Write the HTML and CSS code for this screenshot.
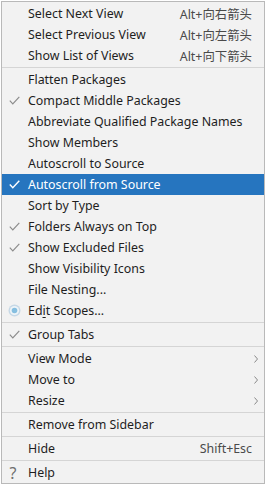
FILE: index.html
```html
<!DOCTYPE html>
<html lang="zh-CN">
<head>
    <meta charset="UTF-8">
    <title>View Options</title>
    <link rel="stylesheet" href="styles.css">
</head>
<body>
    <div class="menu">
        <div class="item"><span class="icon"></span><span class="label">Select Next View</span><span class="key">Alt+向右箭头</span></div>
        <div class="item"><span class="icon"></span><span class="label">Select Previous View</span><span class="key">Alt+向左箭头</span></div>
        <div class="item"><span class="icon"></span><span class="label">Show List of Views</span><span class="key">Alt+向下箭头</span></div>
        <div class="sep"></div>
        <div class="item"><span class="icon"></span><span class="label">Flatten Packages</span></div>
        <div class="item"><span class="icon"><svg class="check" width="11" height="9" viewBox="0 0 11 9"><path d="M0.8 4.6 L3.8 7.8 L10.3 0.8"/></svg></span><span class="label">Compact Middle Packages</span></div>
        <div class="item"><span class="icon"></span><span class="label">Abbreviate Qualified Package Names</span></div>
        <div class="item"><span class="icon"></span><span class="label">Show Members</span></div>
        <div class="item"><span class="icon"></span><span class="label">Autoscroll to Source</span></div>
        <div class="item selected"><span class="icon"><svg class="check" width="11" height="9" viewBox="0 0 11 9"><path d="M0.8 4.6 L3.8 7.8 L10.3 0.8"/></svg></span><span class="label">Autoscroll from Source</span></div>
        <div class="item"><span class="icon"></span><span class="label">Sort by Type</span></div>
        <div class="item"><span class="icon"><svg class="check" width="11" height="9" viewBox="0 0 11 9"><path d="M0.8 4.6 L3.8 7.8 L10.3 0.8"/></svg></span><span class="label">Folders Always on Top</span></div>
        <div class="item"><span class="icon"><svg class="check" width="11" height="9" viewBox="0 0 11 9"><path d="M0.8 4.6 L3.8 7.8 L10.3 0.8"/></svg></span><span class="label">Show Excluded Files</span></div>
        <div class="item"><span class="icon"></span><span class="label">Show Visibility Icons</span></div>
        <div class="item"><span class="icon"></span><span class="label">File Nesting...</span></div>
        <div class="item">
            <span class="icon">
                <svg width="13" height="13" viewBox="0 0 13 13"><circle cx="6.5" cy="6.5" r="6" fill="#c6d8e6"/><circle cx="6.5" cy="6.5" r="4.6" fill="#eef4f8"/><circle cx="6.5" cy="6.5" r="2.8" fill="#86bfe0"/></svg>
            </span>
            <span class="label">Ed<u>i</u>t Scopes...</span>
        </div>
        <div class="sep"></div>
        <div class="item"><span class="icon"><svg class="check" width="11" height="9" viewBox="0 0 11 9"><path d="M0.8 4.6 L3.8 7.8 L10.3 0.8"/></svg></span><span class="label">Group Tabs</span></div>
        <div class="sep"></div>
        <div class="item"><span class="icon"></span><span class="label">View Mode</span><svg class="arrow" width="4" height="8" viewBox="0 0 4 8"><path d="M0.5 0.5 L3.5 4 L0.5 7.5"/></svg></div>
        <div class="item"><span class="icon"></span><span class="label">Move to</span><svg class="arrow" width="4" height="8" viewBox="0 0 4 8"><path d="M0.5 0.5 L3.5 4 L0.5 7.5"/></svg></div>
        <div class="item"><span class="icon"></span><span class="label">Resize</span><svg class="arrow" width="4" height="8" viewBox="0 0 4 8"><path d="M0.5 0.5 L3.5 4 L0.5 7.5"/></svg></div>
        <div class="sep"></div>
        <div class="item"><span class="icon"></span><span class="label">Remove from Sidebar</span></div>
        <div class="sep"></div>
        <div class="item"><span class="icon"></span><span class="label">Hide</span><span class="key">Shift+Esc</span></div>
        <div class="sep"></div>
        <div class="item"><span class="icon help">?</span><span class="label">Help</span></div>
    </div>
</body>
</html>
```

FILE: styles.css
```css
body {
    margin: 0;
    background-color: #ffffff;
    font-family: "Noto Sans", "Noto Sans CJK SC", sans-serif;
    font-size: 12.4px;
}
.menu {
    margin: 1px 0 0 1px;
    width: 262px;
    background-color: #f2f2f2;
    border: 1px solid #b9b9b9;
    padding-top: 1px;
}
.item {
    display: flex;
    align-items: center;
    height: 21px;
    color: #1e1e1e;
    white-space: nowrap;
}
.item.selected {
    background-color: #2675bf;
    color: #ffffff;
}
.icon {
    width: 26px;
    flex: none;
    display: flex;
    justify-content: center;
    padding-right: 2px;
    box-sizing: border-box;
}
.check {
    fill: none;
    stroke: #8c8c8c;
    stroke-width: 1.2;
}
.selected .check {
    stroke: #ffffff;
    stroke-width: 1.4;
}
.help {
    font-size: 16px;
    color: #6e6e6e;
    padding-right: 4px;
}
.label {
    flex: 1;
}
.label u {
    text-decoration-thickness: 1px;
    text-underline-offset: 2px;
}
.key {
    color: #4a4a4a;
    padding-right: 12px;
}
.arrow {
    fill: none;
    stroke: #8a8a8a;
    stroke-width: 1;
    margin-right: 6px;
}
.sep {
    height: 3px;
    display: flex;
    align-items: center;
}
.sep::after {
    content: "";
    display: block;
    width: 100%;
    height: 1px;
    background-color: #d5d5d5;
}
```
